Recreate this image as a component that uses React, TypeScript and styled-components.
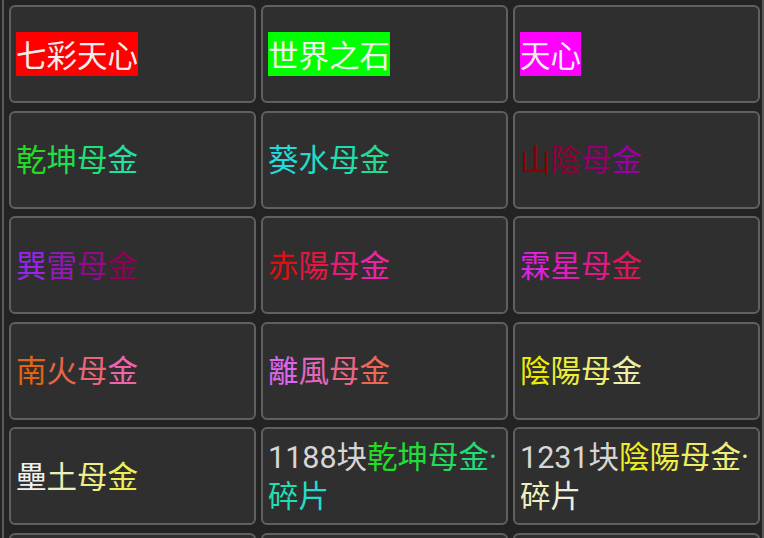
import React from "react";
import styled, { createGlobalStyle } from "styled-components";

const Global = createGlobalStyle`
  html, body {
    margin: 0;
    padding: 0;
    background: #232323;
    overflow: hidden;
  }
  body {
    font-family: Roboto, "Noto Sans CJK SC", sans-serif;
  }
`;

const Frame = styled.div`
  box-sizing: border-box;
  margin-left: 2px;
  width: 762px;
  height: 538px;
  overflow: hidden;
  border-left: 2px solid #5a5a5a;
  border-right: 2px solid #5a5a5a;
  padding: 5px 2px 0 5px;
`;

const Grid = styled.div`
  display: grid;
  grid-template-columns: repeat(3, 247px);
  grid-auto-rows: 98px;
  column-gap: 5px;
  row-gap: 7.5px;
`;

const Cell = styled.div`
  box-sizing: border-box;
  display: flex;
  align-items: center;
  background: #2f2f2f;
  border: 2px solid #606060;
  border-radius: 6px;
  padding: 2px 6px 0 5px;
`;

const Label = styled.div`
  font-size: 30.5px;
  line-height: 39px;
  color: #dcdcdc;
  word-break: break-all;
`;

const Highlight = styled.span<{ $bg: string }>`
  font-family: "Noto Sans CJK SC", sans-serif;
  background: ${(p) => p.$bg};
  color: #f0eeee;
`;

const Plain = styled.span`
  color: #d6d6d6;
`;

type Seg =
  | { kind: "hl"; text: string; bg: string }
  | { kind: "grad"; text: string; from: string; to: string }
  | { kind: "plain"; text: string };

const hex = (c: string) => [
  parseInt(c.slice(1, 3), 16),
  parseInt(c.slice(3, 5), 16),
  parseInt(c.slice(5, 7), 16),
];

const mix = (a: string, b: string, t: number) => {
  const x = hex(a);
  const y = hex(b);
  const r = x.map((v, i) => Math.round(v + (y[i] - v) * t));
  return `rgb(${r[0]},${r[1]},${r[2]})`;
};

const Gradient: React.FC<{ text: string; from: string; to: string }> = ({ text, from, to }) => {
  const chars = Array.from(text);
  const n = Math.max(chars.length - 1, 1);
  return (
    <>
      {chars.map((ch, i) => (
        <span key={i} style={{ color: mix(from, to, i / n) }}>
          {ch}
        </span>
      ))}
    </>
  );
};

const items: Seg[][] = [
  [{ kind: "hl", text: "七彩天心", bg: "#ff0000" }],
  [{ kind: "hl", text: "世界之石", bg: "#00ff00" }],
  [{ kind: "hl", text: "天心", bg: "#ff00ff" }],
  [{ kind: "grad", text: "乾坤母金", from: "#22dd22", to: "#20e0a4" }],
  [{ kind: "grad", text: "葵水母金", from: "#22dcdc", to: "#22dc96" }],
  [{ kind: "grad", text: "山陰母金", from: "#8b0000", to: "#9a00a8" }],
  [{ kind: "grad", text: "巽雷母金", from: "#9a22ea", to: "#90005a" }],
  [{ kind: "grad", text: "赤陽母金", from: "#dd1111", to: "#ee22aa" }],
  [{ kind: "grad", text: "霖星母金", from: "#e022e0", to: "#e01460" }],
  [{ kind: "grad", text: "南火母金", from: "#e06414", to: "#ee66aa" }],
  [{ kind: "grad", text: "離風母金", from: "#dd66ee", to: "#ee6656" }],
  [{ kind: "grad", text: "陰陽母金", from: "#eeee00", to: "#eeeeaa" }],
  [{ kind: "grad", text: "壘土母金", from: "#f0f0f0", to: "#eeee55" }],
  [
    { kind: "plain", text: "1188块" },
    { kind: "grad", text: "乾坤母金·碎片", from: "#22dd22", to: "#22ddcc" },
  ],
  [
    { kind: "plain", text: "1231块" },
    { kind: "grad", text: "陰陽母金·碎片", from: "#eeee22", to: "#eeeedd" },
  ],
  [],
  [],
  [],
];

const renderSeg = (s: Seg, i: number) => {
  if (s.kind === "hl")
    return (
      <Highlight key={i} $bg={s.bg}>
        {s.text}
      </Highlight>
    );
  if (s.kind === "grad") return <Gradient key={i} text={s.text} from={s.from} to={s.to} />;
  return <Plain key={i}>{s.text}</Plain>;
};

export default function App() {
  return (
    <>
      <Global />
      <Frame>
        <Grid>
          {items.map((segs, i) => (
            <Cell key={i}>
              <Label>{segs.map(renderSeg)}</Label>
            </Cell>
          ))}
        </Grid>
      </Frame>
    </>
  );
}
